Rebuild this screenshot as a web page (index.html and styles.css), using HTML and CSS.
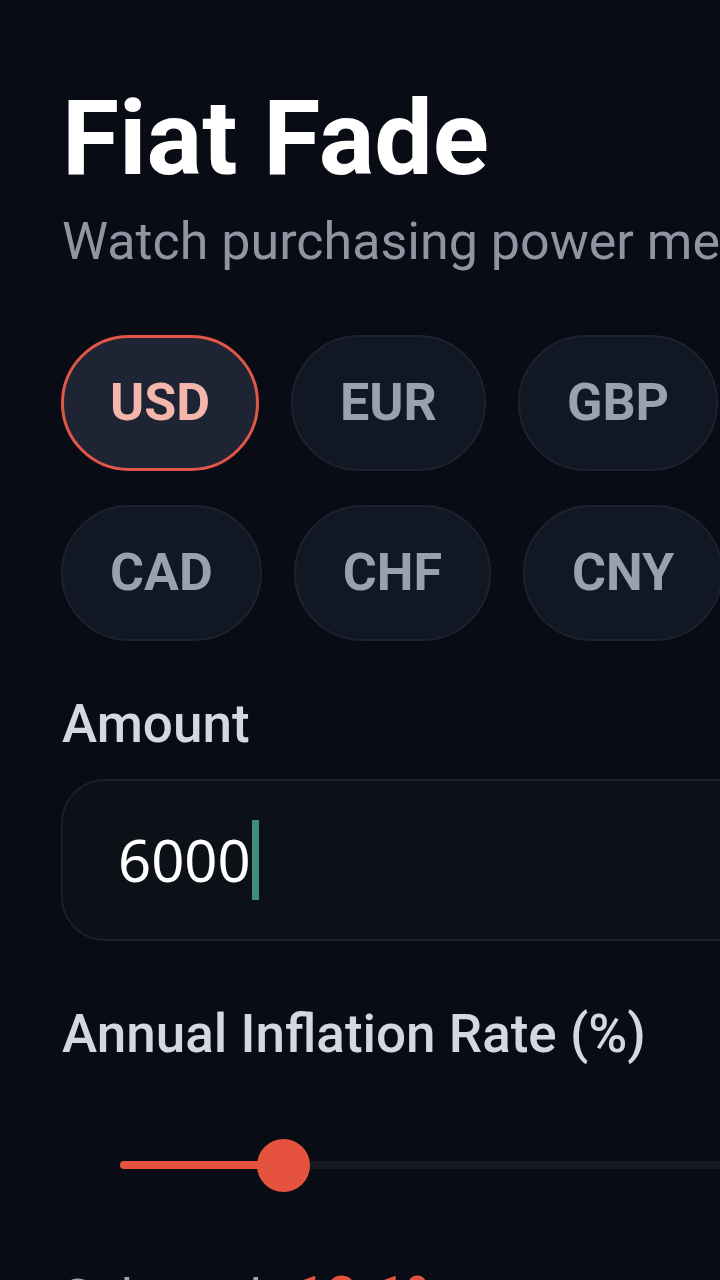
FILE: index.html
```html
<!DOCTYPE html>
<html lang="en">
<head>
<meta charset="utf-8">
<title>Fiat Fade</title>
<link rel="stylesheet" href="styles.css">
</head>
<body>
<main class="app">
  <h1 class="title">Fiat Fade</h1>
  <p class="subtitle">Watch purchasing power melt away over time</p>

  <div class="chips">
    <button class="chip chip-active">USD</button>
    <button class="chip">EUR</button>
    <button class="chip">GBP</button>
    <button class="chip">CAD</button>
    <button class="chip">CHF</button>
    <button class="chip">CNY</button>
  </div>

  <label class="label label-amount">Amount</label>
  <div class="input">
    <span class="input-text">6000</span><span class="caret"></span>
  </div>

  <label class="label label-rate">Annual Inflation Rate (%)</label>
  <div class="slider">
    <div class="track">
      <div class="fill" style="width: 163px"></div>
      <div class="thumb" style="left: 163px"></div>
    </div>
  </div>

  <p class="readout">Selected: <span class="readout-value">10.1%</span></p>
</main>
</body>
</html>
```

FILE: styles.css
```css
html, body {
  margin: 0;
  padding: 0;
  background: #090c14;
  overflow: hidden;
}

.app {
  box-sizing: border-box;
  width: 900px;
  padding: 87px 62px 40px 61px;
  font-family: Roboto, "Liberation Sans", sans-serif;
}

.title {
  margin: 0 0 0 1px;
  font-size: 104px;
  line-height: 104px;
  font-weight: 700;
  color: #ffffff;
}

.subtitle {
  margin: 20px 0 0 1px;
  font-size: 52px;
  line-height: 62px;
  font-weight: 400;
  color: #8f96a3;
  white-space: nowrap;
}

.chips {
  display: flex;
  flex-wrap: wrap;
  column-gap: 32px;
  row-gap: 34px;
  margin-top: 62px;
}

.chip {
  font-family: Roboto, "Liberation Sans", sans-serif;
  font-size: 52px;
  line-height: 62px;
  font-weight: 700;
  padding: 35px 47px;
  border: 2px solid #1c2230;
  border-radius: 999px;
  background: #111723;
  color: #9aa1ae;
}

.chip-active {
  background: #1e2433;
  border: 3px solid #e0574a;
  padding: 34px 46px;
  color: #f4b6ab;
}

.label {
  display: block;
  margin-left: 1px;
  font-size: 53px;
  line-height: 58px;
  font-weight: 500;
  color: #d3d8e1;
}

.label-amount {
  margin-top: 54px;
}

.input {
  box-sizing: border-box;
  margin-top: 26px;
  height: 162px;
  border: 2px solid #1b202a;
  border-radius: 44px;
  background: #0c1017;
  display: flex;
  align-items: center;
  padding-left: 55px;
}

.input-text {
  font-family: "Noto Sans", "Open Sans", sans-serif;
  font-size: 58px;
  line-height: 80px;
  color: #ffffff;
}

.caret {
  width: 7px;
  height: 80px;
  background: #3f8c7a;
  margin-left: 1px;
}

.label-rate {
  margin-top: 64px;
}

.slider {
  margin-top: 76px;
  height: 52px;
  display: flex;
  align-items: center;
  padding-left: 59px;
}

.track {
  position: relative;
  flex: 1;
  height: 8px;
  background: #151a22;
  border-radius: 4px;
}

.fill {
  height: 8px;
  background: #e5533f;
  border-radius: 4px 0 0 4px;
}

.thumb {
  position: absolute;
  top: 50%;
  width: 53px;
  height: 53px;
  margin-left: -26px;
  margin-top: -26px;
  border-radius: 50%;
  background: #e5533f;
}

.readout {
  margin: 75px 0 0 1px;
  font-size: 52px;
  line-height: 62px;
  color: #9ca3af;
  white-space: nowrap;
}

.readout-value {
  margin-left: 6px;
  font-size: 56px;
  font-weight: 700;
  color: #e5533f;
}
```
